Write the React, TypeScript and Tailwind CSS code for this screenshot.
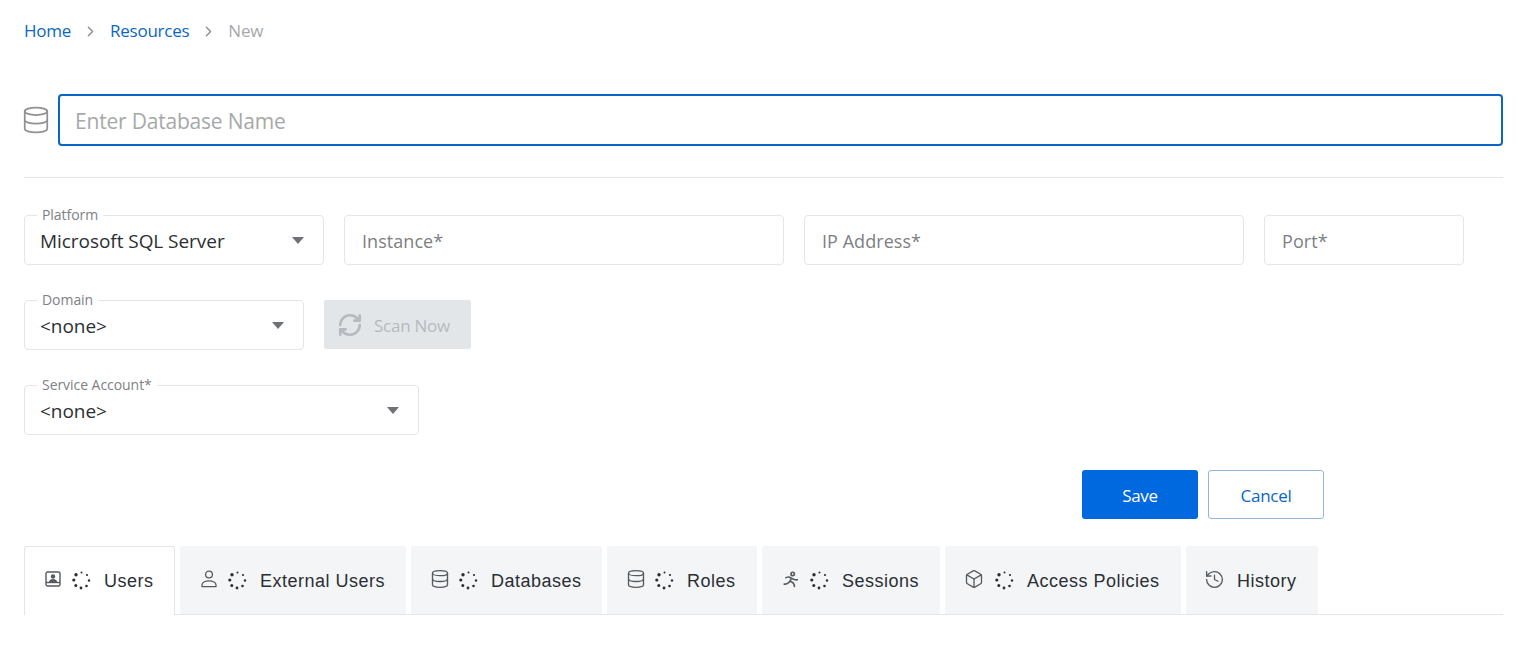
import type { ReactNode } from "react";
import { ChevronRight, Database, RefreshCw, Box, History } from "lucide-react";
import { PiPersonSimpleRunBold } from "react-icons/pi";

const segoe = "font-['Open_Sans','Noto_Sans',sans-serif]";

function Spinner() {
  const dots = [
    [9.5, 1.5, 1],
    [15, 4, 1.1],
    [17, 9.5, 1.2],
    [14.5, 15, 1.3],
    [9, 17, 1.4],
    [3.8, 14.5, 1.5],
    [1.8, 9, 1.6],
    [4, 3.8, 1.7],
  ];
  return (
    <svg width="19" height="19" viewBox="0 0 19 19" className="shrink-0 -ml-[1px]">
      {dots.map(([cx, cy, r]) => (
        <circle key={`${cx}-${cy}`} cx={cx} cy={cy} r={r} fill="#2b2f33" />
      ))}
    </svg>
  );
}

function ContactIcon() {
  return (
    <svg width="16" height="16" viewBox="0 0 16 16" fill="none" className="shrink-0">
      <rect x="1" y="1" width="14" height="14" rx="1.5" stroke="currentColor" strokeWidth="1.4" />
      <path d="M1 11.5h14" stroke="currentColor" strokeWidth="1.4" />
      <circle cx="8" cy="5.5" r="2.2" fill="currentColor" />
      <path d="M3.8 11c.4-2 2.1-3 4.2-3s3.8 1 4.2 3z" fill="currentColor" />
    </svg>
  );
}

function PersonIcon() {
  return (
    <svg width="16" height="18" viewBox="0 0 16 18" fill="none" stroke="currentColor" strokeWidth="1.3" className="shrink-0">
      <circle cx="8" cy="4.5" r="3.4" />
      <path d="M1 16.7v-1.6c0-2.6 3-4.3 7-4.3s7 1.7 7 4.3v1.6z" strokeLinejoin="round" />
    </svg>
  );
}

function SelectField({ label, value, className }: { label: string; value: string; className: string }) {
  return (
    <div className={`relative h-[50px] rounded border border-[#e3e5e7] flex items-center justify-between pl-[15px] pr-[19px] ${className}`}>
      <span className="absolute left-[12px] -top-[9px] bg-white px-[5px] text-[14px] leading-[16px] tracking-[-0.05px] text-[#7d8185]">
        {label}
      </span>
      <span className="text-[19px] text-[#2b2f33] pt-[3px] -tracking-[0.05px]">{value}</span>
      <span className="w-0 h-0 border-x-[6.5px] border-x-transparent border-t-[7px] border-t-[#6e7277]" />
    </div>
  );
}

function TextField({ placeholder, className }: { placeholder: string; className: string }) {
  return (
    <div className={`h-[50px] rounded border border-[#e3e5e7] flex items-center pl-[17px] pt-[2px] text-[18px] tracking-[0.05px] text-[#7d7f81] ${className}`}>
      {placeholder}
    </div>
  );
}

function Tab({ icon, label, width, active, loading = true, inset = "pl-[20px]" }: { icon: ReactNode; label: string; width: string; active?: boolean; loading?: boolean; inset?: string }) {
  return (
    <div
      className={`${width} ${inset} shrink-0 rounded-t-[3px] flex items-center gap-[12px] text-[18px] tracking-[0.5px] text-[#2b2f33] font-['Liberation_Sans',sans-serif] ${
        active ? "bg-white border border-b-0 border-[#e3e5e7] relative z-10 h-[69px] pb-[2px]" : "bg-[#f3f5f7] h-[68px]"
      }`}
    >
      <span className="w-[17px] flex justify-center text-[#555b61] -mt-[2px]">{icon}</span>
      {loading && <Spinner />}
      <span className={`whitespace-nowrap pt-[2px] ${loading ? "ml-[1px]" : "ml-[2px]"}`}>{label}</span>
    </div>
  );
}

export default function App() {
  return (
    <div className={`w-[1521px] h-[653px] bg-white overflow-hidden pl-[24px] pr-[18px] ${segoe}`}>
      {/* breadcrumb */}
      <nav className="h-[62px] flex items-center text-[17px] tracking-[-0.25px]">
        <span className="text-[#0b66c3]">Home</span>
        <ChevronRight size={17} className="mx-[11px] text-[#8b8f93]" />
        <span className="text-[#0b66c3]">Resources</span>
        <ChevronRight size={17} className="mx-[11px] text-[#8b8f93]" />
        <span className="text-[#a6a8aa]">New</span>
      </nav>

      {/* name */}
      <div className="mt-[32px] flex items-center gap-[10px]">
        <span className="w-[24px] shrink-0 flex justify-center">
          <Database size={30} strokeWidth={1.4} className="text-[#8f9193] shrink-0" />
        </span>
        <div className="flex-1 h-[52px] rounded border-2 border-[#0b66c3] flex items-center pl-[15px] pt-[3px] text-[21px] tracking-[-0.2px] text-[#a6a8aa]">
          Enter Database Name
        </div>
      </div>

      <div className="mt-[31px] border-t border-[#e3e5e7]" />

      {/* fields */}
      <div className="mt-[37px] flex gap-[20px]">
        <SelectField label="Platform" value="Microsoft SQL Server" className="w-[300px]" />
        <TextField placeholder="Instance*" className="w-[440px]" />
        <TextField placeholder="IP Address*" className="w-[440px]" />
        <TextField placeholder="Port*" className="w-[200px]" />
      </div>

      <div className="mt-[35px] flex gap-[20px]">
        <SelectField label="Domain" value="<none>" className="w-[280px]" />
        <div className="w-[147px] h-[49px] bg-[#e3e6e9] rounded-[2px] flex items-center pl-[14px] gap-[11px] text-[#b5babe] text-[17px] tracking-[-0.25px]">
          <RefreshCw size={26} strokeWidth={2.4} className="text-[#b5babe] -ml-px shrink-0" />
          <span className="pt-[2px]">Scan Now</span>
        </div>
      </div>

      <div className="mt-[35px]">
        <SelectField label="Service Account*" value="<none>" className="w-[395px]" />
      </div>

      {/* actions */}
      <div className="mt-[35px] flex gap-[10px] pl-[1058px]">
        <div className="w-[116px] h-[49px] pt-[2px] rounded-[3px] bg-[#0069e0] text-white text-[17px] tracking-[-0.3px] flex items-center justify-center">
          Save
        </div>
        <div className="w-[116px] h-[49px] pt-[2px] rounded-[3px] border border-[#8fb4de] text-[#0b66c3] text-[17px] tracking-[-0.3px] flex items-center justify-center">
          Cancel
        </div>
      </div>

      {/* tabs */}
      <div className="mt-[27px] h-[69px] border-b border-[#e3e5e7] flex items-start gap-[5px]">
        <Tab active inset="pl-[19px]" width="w-[151px]" label="Users" icon={<ContactIcon />} />
        <Tab width="w-[226px]" label="External Users" icon={<PersonIcon />} />
        <Tab width="w-[191px]" label="Databases" icon={<Database size={20} strokeWidth={1.6} className="shrink-0" />} />
        <Tab width="w-[150px]" label="Roles" icon={<Database size={20} strokeWidth={1.6} className="shrink-0" />} />
        <Tab width="w-[178px]" label="Sessions" icon={<PiPersonSimpleRunBold size={18} className="shrink-0" />} />
        <Tab inset="pl-[22px]" width="w-[236px]" label="Access Policies" icon={<Box size={20} strokeWidth={1.6} className="shrink-0 -ml-[3px]" />} />
        <Tab width="w-[132px]" label="History" loading={false} icon={<History size={21} strokeWidth={1.5} className="shrink-0" />} />
      </div>
    </div>
  );
}
